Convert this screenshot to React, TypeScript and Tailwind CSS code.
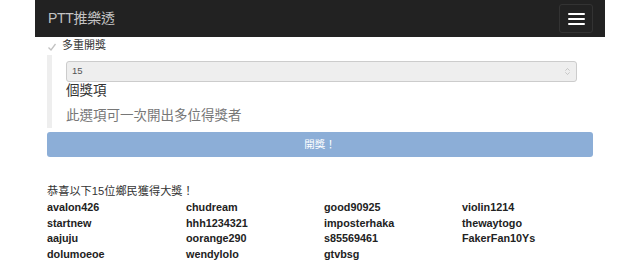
import { ChevronsUpDown } from "lucide-react";

const winners = [
  "avalon426", "chudream", "good90925", "violin1214",
  "startnew", "hhh1234321", "imposterhaka", "thewaytogo",
  "aajuju", "oorange290", "s85569461", "FakerFan10Ys",
  "dolumoeoe", "wendylolo", "gtvbsg",
];

const cjk = "font-['Liberation_Sans','Noto_Sans_CJK_TC',sans-serif]";

export default function App() {
  return (
    <div className={`w-[640px] h-[263px] overflow-hidden bg-white ${cjk}`}>
      <div className="w-[570px] mx-auto">
        {/* navbar */}
        <div className="h-[37px] bg-[#222222] flex items-center justify-between pl-[13px] pr-[12px]">
          <span className="text-[14px] text-[#c4c4c4] tracking-[-0.3px]">PTT推樂透</span>
          <button className="w-[34px] h-[29px] border border-[#333333] rounded-[3px] flex flex-col items-center justify-center gap-[3px]">
            <span className="block w-[17px] h-[2px] bg-white rounded-[1px]" />
            <span className="block w-[17px] h-[2px] bg-white rounded-[1px]" />
            <span className="block w-[17px] h-[2px] bg-white rounded-[1px]" />
          </button>
        </div>

        <div className="px-[12px]">
          {/* multi draw checkbox */}
          <label className="flex items-center h-[16px] gap-[5px]">
            <span className="w-[10px] h-[10px] mt-[4px] flex items-center justify-center">
              <svg width="10" height="10" viewBox="0 0 10 10">
                <path d="M1.5 5.5 L4 8 L8.5 2" fill="none" stroke="#c2c2c2" strokeWidth="1.3" />
              </svg>
            </span>
            <span className="text-[11px] text-[#333333]">多重開獎</span>
          </label>

          {/* options block */}
          <div className="mt-[2px] border-l-[5px] border-[#eeeeee] pl-[14px] pt-[6px] pb-[2px]">
            <div className="h-[21px] w-[511px] bg-[#eeeeee] border border-[#cccccc] rounded-[3px] flex items-center justify-between pl-[5px] pr-[4px]">
              <span className="text-[9.5px] text-[#555555]">15</span>
              <ChevronsUpDown size={9} color="#aaaaaa" strokeWidth={1.5} />
            </div>
            <div className="text-[13.5px] leading-[20px] text-[#333333] mt-[-1px]">個獎項</div>
            <div className="text-[13.5px] leading-[20px] text-[#777777] mt-[5px]">此選項可一次開出多位得獎者</div>
          </div>

          {/* draw button */}
          <button className="mt-[4px] w-full h-[25px] rounded-[3px] bg-[#8caed7] text-white text-[10.5px] flex items-center justify-center">
            開獎！
          </button>

          {/* results */}
          <div className="mt-[26px] text-[11.2px] leading-[16px] text-[#333333]">恭喜以下15位鄉民獲得大獎！</div>
          <div className="mt-[1px] grid grid-cols-[139px_138px_138px_130px]">
            {winners.map((name) => (
              <div
                key={name}
                className="font-['Liberation_Sans',Arial,sans-serif] font-bold text-[10.8px] leading-[15.5px] text-[#222222]"
              >
                {name}
              </div>
            ))}
          </div>
        </div>
      </div>
    </div>
  );
}
